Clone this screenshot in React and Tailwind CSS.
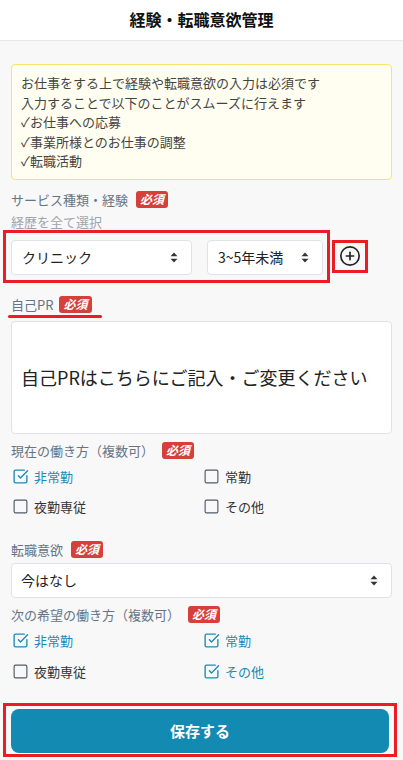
import React from "react";
import { Square, SquareCheckBig, CirclePlus } from "lucide-react";

const font = { fontFamily: '"Noto Sans CJK JP", "Noto Sans", sans-serif' };

function Badge() {
  return (
    <span className="inline-flex h-[17px] items-center rounded-[3px] bg-[#d6403a] px-[4px] text-[12px] font-bold italic leading-none text-white">
      必須
    </span>
  );
}

function Arrows() {
  return (
    <svg width="8" height="11" viewBox="0 0 8 11" className="shrink-0">
      <path d="M4 0.5 L7.5 4.3 H0.5 Z" fill="#333" />
      <path d="M4 10.5 L7.5 6.7 H0.5 Z" fill="#333" />
    </svg>
  );
}

function Select({ children, className }) {
  return (
    <div
      className={
        "flex h-[35px] items-center justify-between rounded-[4px] border border-[#dfe3e8] bg-white pl-[10px] pr-[13px] text-[14px] leading-[20px] text-[#222] " +
        className
      }
    >
      <span>{children}</span>
      <Arrows />
    </div>
  );
}

function Check({ label, checked }) {
  return (
    <div className={"flex h-[19px] items-center gap-[5px] text-[13px] leading-[19px] " + (checked ? "text-[#1b8ab4]" : "text-[#333]")}>
      {checked ? (
        <SquareCheckBig size={17} strokeWidth={1.9} color="#1b8ab4" />
      ) : (
        <Square size={17} strokeWidth={1.6} color="#4f5965" />
      )}
      <span>{label}</span>
    </div>
  );
}

function Label({ children, gap = "gap-[8px]" }) {
  return (
    <div className={"flex h-[19px] items-center text-[13px] leading-[19px] text-[#667585] " + gap}>
      <span>{children}</span>
      <Badge />
    </div>
  );
}

export default function App() {
  return (
    <div className="min-h-[760px] w-[403px] bg-[#f8f8f8]" style={font}>
      <header className="flex h-[41px] items-center justify-center border-b border-[#e8e8e8] bg-white pb-[3px] text-[16px] font-bold leading-[22px] text-[#111]">
        経験・転職意欲管理
      </header>

      <div className="px-[11px]">
        <div className="mt-[23px] rounded-[4px] border border-[#fbe36a] bg-[#fffef0] px-[9px] py-[8px] text-[13px] leading-[19.6px] text-[#444]">
          <div>お仕事をする上で経験や転職意欲の入力は必須です</div>
          <div>入力することで以下のことがスムーズに行えます</div>
          <div>✓お仕事への応募</div>
          <div>✓事業所様とのお仕事の調整</div>
          <div>✓転職活動</div>
        </div>

        <div className="mt-[10px]">
          <Label>サービス種類・経験</Label>
        </div>
        <div className="mt-[5px] text-[13px] leading-[16px] text-[#a0a5aa]">経歴を全て選択</div>

        <div className="flex items-start">
          <div className="ml-[-8px] flex w-[327px] gap-[15px] border-[3px] border-[#ec1c24] pb-[5px] pl-[5px] pt-[7px]">
            <Select className="w-[181px]">クリニック</Select>
            <Select className="w-[116px]">3~5年未満</Select>
          </div>
          <div className="ml-[2px] mt-[10px] flex h-[33px] w-[36px] items-center justify-center border-[3px] border-[#ec1c24]">
            <CirclePlus size={22} strokeWidth={1.8} color="#222" />
          </div>
        </div>

        <div className="mt-[12px] flex">
          <div className="ml-[-3px] flex flex-col">
            <div className="pl-[3px]">
              <Label gap="gap-[6px]">自己PR</Label>
            </div>
            <div className="mt-[1px] h-[3px] w-[94px] rounded-full bg-[#ec1c24]" />
          </div>
        </div>

        <div className="mt-[3px] flex h-[113px] items-center rounded-[4px] border border-[#dfe3e8] bg-white px-[9px] text-[18px] leading-[26px] text-[#222]">
          自己PRはこちらにご記入・ご変更ください
        </div>

        <div className="mt-[7px]">
          <Label gap="gap-[8px]">現在の働き方（複数可）</Label>
        </div>
        <div className="mt-[7px] grid grid-cols-2 gap-y-[11px] pl-[1px]">
          <Check label="非常勤" checked />
          <div className="pl-[1px]"><Check label="常勤" /></div>
          <Check label="夜勤専従" />
          <div className="pl-[1px]"><Check label="その他" /></div>
        </div>

        <div className="mt-[24px]">
          <Label>転職意欲</Label>
        </div>
        <Select className="mt-[4px] w-full !pl-[9px]">今はなし</Select>

        <div className="mt-[7px]">
          <Label gap="gap-[8px]">次の希望の働き方（複数可）</Label>
        </div>
        <div className="mt-[7px] grid grid-cols-2 gap-y-[12px] pl-[1px]">
          <Check label="非常勤" checked />
          <div className="pl-[1px]"><Check label="常勤" checked /></div>
          <Check label="夜勤専従" />
          <div className="pl-[1px]"><Check label="その他" checked /></div>
        </div>

        <div className="mt-[22px] ml-[-8px] mr-[-5px] border-[3px] border-[#ec1c24] px-[5px] pb-[1px] pt-[3px]">
          <button className="flex h-[44px] w-full items-center justify-center rounded-[8px] bg-[#138ab2] text-[15px] font-bold text-white">
            保存する
          </button>
        </div>
      </div>
    </div>
  );
}
